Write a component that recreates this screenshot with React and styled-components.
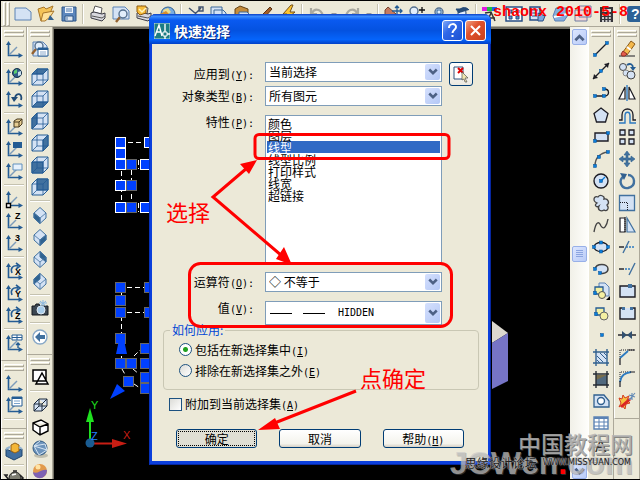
import React, { useState } from "react";
import styled, { createGlobalStyle, css } from "styled-components";

const GlobalStyle = createGlobalStyle`
  * {
    box-sizing: border-box;
  }

  body {
    margin: 0;
    background: #000;
    font-family: "Noto Sans CJK SC", "Liberation Sans", sans-serif;
    font-size: 12px;
    color: #000;
  }
`;

const Shell = styled.div`
  position: relative;
  display: flex;
  flex-direction: column;
  height: 100vh;
  padding: 1px 0 1px 1px;
  overflow: hidden;
`;

const TopBar = styled.header`
  display: flex;
  align-items: center;
  height: 26px;
  padding-left: 2px;
  background: #ece9d8;
  border-bottom: 1px solid #aca899;
  overflow: hidden;
  flex-shrink: 0;
`;

const Workspace = styled.div`
  display: flex;
  flex: 1;
  min-height: 0;
`;

const Dock = styled.div`
  display: flex;
  background: #ece9d8;
`;

const Column = styled.div`
  display: flex;
  flex-direction: column;
  width: 26px;
  overflow: hidden;
  border-right: 1px solid #aca899;
`;

const ToolBar = styled.div`
  display: flex;
  flex-direction: column;
  align-items: center;
  flex-shrink: 0;
  padding: 3px 2px 6px 1px;
  border-bottom: 1px solid #aca899;
  border-left: 1px solid #fff;
`;

const Grip = styled.div`
  flex-shrink: 0;
  border: 1px solid #aca899;
  border-top-color: #fff;
  border-left-color: #fff;

  ${({ $upright }) =>
    $upright
      ? css`
          width: 3px;
          height: 24px;
          margin-right: 1px;
        `
      : css`
          width: 20px;
          height: 3px;
          margin-bottom: 1px;
        `}
`;

const Divider = styled.div`
  flex-shrink: 0;
  background: #c5c2b0;
  border: 0 solid #fff;

  ${({ $upright }) =>
    $upright
      ? css`
          width: 2px;
          height: 20px;
          margin: 0 2px;
          border-right-width: 1px;
        `
      : css`
          width: 20px;
          height: 2px;
          margin: 2px 0;
          border-bottom-width: 1px;
        `}
`;

const ToolButton = styled.button`
  display: flex;
  align-items: center;
  justify-content: center;
  flex-shrink: 0;
  width: ${({ $narrow }) => ($narrow ? "12px" : "23px")};
  height: 22px;
  padding: 0;
  border: 0;
  background: none;
`;

const Glyph = styled.svg`
  display: block;
  width: 18px;
  height: 18px;
  overflow: visible;
`;

const Canvas = styled.main`
  display: flex;
  justify-content: space-between;
  flex: 1;
  min-width: 0;
  background: #000;
  border-top: 2px solid #716f64;
  border-left: 1px solid #716f64;
`;

const Sketch = styled.svg`
  display: block;
  height: 450px;
  width: ${({ $width }) => $width};
`;

const ScrollTrack = styled.div`
  display: flex;
  flex-direction: column;
  align-items: center;
  justify-content: space-between;
  width: 18px;
  padding: 2px 0 0;
  background: linear-gradient(to right, #f1f0e8, #fefefb);
`;

const ScrollPart = styled.button`
  display: flex;
  align-items: center;
  justify-content: center;
  width: 15px;
  height: 16px;
  padding: 0;
  border: 1px solid #98b0e8;
  border-radius: 2px;
  background: linear-gradient(135deg, #dce6ff, #b9cbf7);
`;

const Dialog = styled.section`
  position: absolute;
  top: 14px;
  left: 0;
  right: 0;
  width: 342px;
  margin: 0 auto;
  padding: 0 3px 4px;
  border-radius: 7px 7px 0 0;
  background: #0b3fdc;
  box-shadow: inset 1px 0 #0831b8, inset -1px -1px #0626a0;
`;

const TitleBar = styled.div`
  display: flex;
  align-items: center;
  height: 30px;
  margin: 0 -3px;
  padding: 3px 5px 0;
  border-radius: 7px 7px 0 0;
  background: linear-gradient(#0a3fc4, #3a8cff 8%, #0a5af0 20%, #0452e0 55%, #0564fb 85%, #0340c6);
`;

const Title = styled.h1`
  flex: 1;
  margin: 0 0 0 4px;
  font-size: 14px;
  line-height: 20px;
  color: #fff;
  text-shadow: 1px 1px #0a2a80;
`;

const CaptionButton = styled.button`
  display: flex;
  align-items: center;
  justify-content: center;
  width: 21px;
  height: 21px;
  margin-left: 2px;
  padding: 0;
  border: 1px solid #fff;
  border-radius: 3px;
  background: ${({ $close }) =>
    $close
      ? "linear-gradient(135deg, #f0a080, #e0512c 40%, #c8401c)"
      : "linear-gradient(135deg, #7fa8f8, #3068e8 40%, #1c50d0)"};
`;

const Body = styled.form`
  padding: 18px 0 13px;
  background: #ece9d8;
`;

const FormRow = styled.div`
  display: grid;
  grid-template-columns: 1fr 177px 24px;
  column-gap: 7px;
  align-items: start;
  margin: 0 15px ${({ $space = 0 }) => $space}px 0;
`;

const FormLabel = styled.label`
  align-self: ${({ $top }) => ($top ? "start" : "center")};
  padding-right: 4px;
  line-height: 14px;
  text-align: right;
  white-space: nowrap;
`;

const Mnemonic = styled.span`
  font-family: "DejaVu Sans Mono", monospace;
  font-size: 10px;
  line-height: 1;
`;

const SelectFrame = styled.div`
  display: grid;
  align-items: center;
  height: ${({ $tall }) => ($tall ? "24px" : "20px")};
  border: 1px solid #7f9db9;
  background: #fff;

  > * {
    grid-area: 1 / 1;
  }
`;

const Select = styled.select`
  appearance: none;
  width: 100%;
  height: 18px;
  padding: 0 20px 0 ${({ $inset = 3 }) => $inset}px;
  border: 0;
  background: none;
  font-family: ${({ $mono }) =>
    $mono ? '"DejaVu Sans Mono", monospace' : '"Noto Sans CJK SC", sans-serif'};
  font-size: ${({ $mono }) => ($mono ? "10px" : "12px")};
  line-height: 18px;
  color: #000;
  outline: 0;
`;

const DropArrow = styled.span`
  display: flex;
  align-items: center;
  justify-content: center;
  justify-self: end;
  align-self: stretch;
  width: 15px;
  margin: 1px;
  border-radius: 2px;
  background: linear-gradient(135deg, #d5e0fd, #b4c8f6);
  pointer-events: none;
`;

const LinePreview = styled.svg`
  width: 56px;
  height: 3px;
  margin-left: 4px;
  pointer-events: none;
`;

const ListBox = styled.select`
  width: 100%;
  height: 148px;
  padding: 1px;
  border: 1px solid #7f9db9;
  border-radius: 0;
  background: #fff;
  font-family: "Noto Sans CJK SC", sans-serif;
  font-size: 12px;
  outline: 0;
  overflow: hidden;

  option {
    display: flex;
    align-items: center;
    height: 12px;
    min-height: 0;
    padding: 0 1px;
    line-height: 12px;
    color: #000;
  }

  option:checked {
    background: #316ac5 linear-gradient(#316ac5, #316ac5);
    color: #fff;
  }
`;

const PickButton = styled.button`
  display: flex;
  align-items: center;
  justify-content: center;
  width: 24px;
  height: 24px;
  padding: 0;
  border: 1px solid #003c74;
  border-radius: 3px;
  background: linear-gradient(#fff, #ece9e0);
`;

const Group = styled.fieldset`
  margin: 0 9px 0 11px;
  padding: 4px 15px 8px;
  border: 1px solid #c9c7b4;
  border-radius: 4px;
`;

const Legend = styled.legend`
  margin-left: -9px;
  padding: 0 2px;
  line-height: 10px;
  color: #0046d5;
`;

const Choice = styled.label`
  display: flex;
  align-items: center;
  gap: 3px;
  line-height: ${({ $loose }) => ($loose ? "21px" : "14px")};
  margin: ${({ $loose }) => ($loose ? "0" : "7px 0 0 17px")};

  input {
    appearance: none;
    width: 13px;
    height: 13px;
    margin: 0;
    border: 1px solid #1c5180;
    background: linear-gradient(135deg, #dcdcd7, #fff);
  }

  input[type="radio"] {
    border-radius: 50%;
  }

  input:checked {
    background: radial-gradient(circle, #21a121 0 2px, #fff 3px);
  }
`;

const Actions = styled.div`
  display: flex;
  gap: 22px;
  margin: 18px 24px 0;
`;

const PushButton = styled.button`
  flex: 1;
  height: 19px;
  padding: 0;
  border: 1px solid #003c74;
  border-radius: 3px;
  background: ${({ $pressed }) =>
    $pressed ? "#e0dfd4" : "linear-gradient(#fff, #f4f3ec 80%, #d6d0c5)"};
  font: inherit;
  line-height: 15px;
  color: #000;
  outline: ${({ $pressed }) => ($pressed ? "1px dotted #000" : "0")};
  outline-offset: -3px;
`;

const Markup = styled.svg`
  position: absolute;
  inset: 0;
  width: 342px;
  height: 451px;
  pointer-events: none;
`;

const Note = styled.span`
  position: absolute;
  left: ${({ $left }) => $left}px;
  top: ${({ $top }) => $top}px;
  font-size: 22px;
  line-height: 24px;
  color: #f00;
  pointer-events: none;
`;

const Stamp = styled.div`
  position: absolute;
  top: 4px;
  right: 12px;
  font: bold 15px/18px "Liberation Mono", monospace;
  color: #f00;
  white-space: pre;
  pointer-events: none;
`;

const Watermark = styled.div`
  position: absolute;
  right: 7px;
  bottom: 6px;
  display: grid;
  justify-items: end;
  pointer-events: none;
`;

const SiteName = styled.span`
  font-size: 23px;
  font-weight: 500;
  line-height: 18px;
  color: rgba(180, 180, 180, 0.85);
  text-shadow: 1px 1px rgba(90, 90, 90, 0.7);
`;

const SiteAddress = styled.span`
  grid-area: 2 / 1;
  font: bold 32px/22px "Liberation Sans", sans-serif;
  color: rgba(200, 200, 200, 0.68);
  text-shadow: 1px 1px rgba(110, 110, 110, 0.4);

  i {
    font-style: normal;
    color: #f00;
  }
`;

const ForumName = styled.span`
  grid-area: 2 / 1;
  align-self: center;
  display: flex;
  align-items: center;
  gap: 6px;
  padding-right: 2px;
  line-height: 18px;
  color: #222;
  text-shadow: 0 0 1px #bbb, 0 0 1px #bbb, 0 0 2px #bbb;
  white-space: nowrap;

  small {
    font: 8px/12px "DejaVu Sans", sans-serif;
  }
`;

const BLUE = "#245c94";
const INK = "#1c1c24";
const PALE = "#d4e2f4";

const Axes = () => (
  <>
    <path d="M3.5 3V15.5H15" fill="none" stroke={BLUE} strokeWidth="1.6" />
    <path d="M1 5L3.5 1L6 5ZM13.5 13L18 15.5L13.5 18Z" fill={BLUE} />
  </>
);

const axesWith = (extra) => (
  <>
    <Axes />
    <path d="M4 15L12 7" stroke="#7d9cba" strokeWidth="1.4" />
    {extra}
  </>
);

const axesLetter = (letter, turning) => (
  <>
    <Axes />
    {turning ? (
      <path d="M7 11C5 6 8 3 13 4M11 1L15 4L11 7" fill="none" stroke={BLUE} strokeWidth="1.6" />
    ) : (
      <path d="M4 15L11 8" stroke="#7d9cba" strokeWidth="1.4" />
    )}
    <text x="10" y={turning ? 13 : 7} fontFamily="Liberation Sans, sans-serif" fontWeight="bold" fontSize="9">
      {letter}
    </text>
  </>
);

const cube = (face) => (
  <g stroke={BLUE} strokeLinejoin="round">
    <path d="M1 6L6 1H17V12L12 17H1Z" fill={PALE} />
    <path d={face} fill="#41719f" />
    <path d="M1 6H12V17M12 6L17 1M6 1V12H17M6 12L1 17" fill="none" strokeWidth="0.8" />
  </g>
);

const gem = (face) => (
  <g stroke="#41719f" strokeLinejoin="round">
    <path d="M9 1.5L15 7V12L9 17.5L3 12V7Z" fill={PALE} />
    <path d={face} fill="#2f628f" />
    <path d="M3 7L9 12L15 7M9 12V17" fill="none" strokeWidth="0.8" />
  </g>
);

const node = (x, y) => <rect x={x - 1.5} y={y - 1.5} width="3" height="3" fill="#0a7edb" stroke="#064f91" strokeWidth="0.5" />;

const Sheet = () => <path d="M2 2H12L16 6V16H2Z" fill={PALE} stroke="#5b82b4" />;
const Lens = ({ x, y }) => (
  <>
    <path d={`M${x - 3} ${y + 3}L${x - 7} ${y + 8}`} stroke="#94622f" strokeWidth="2.4" />
    <circle cx={x} cy={y} r="4" fill="#e2eefb" stroke="#55708e" strokeWidth="1.4" />
  </>
);

const Printer = () => (
  <>
    <path d="M6 1L13 3L12 9L4 7Z" fill="#fff" stroke="#555" />
    <path d="M2 8L5 7L13 9L16 8V13L13 16L2 13Z" fill="#d8d8de" stroke="#3c3c46" />
    <path d="M3 11L13 13L16 11" fill="none" stroke="#555" />
  </>
);

const drawings = {
  // standard bar
  blank: <path d="M1 3H12L17 7V15H1Z" fill={PALE} stroke="#5b82b4" />,
  open: (
    <>
      <path d="M1 4L7 2L9 4L16 1L14 6L6 15L4 16Z" fill="#f4c358" stroke="#a8762a" />
      <path d="M6 8L17 6L13 12L8 16H4Z" fill="#ffe19a" stroke="#a8762a" />
      <path d="M13 10L17 15H11Z" fill="#31608f" />
    </>
  ),
  save: (
    <>
      <path d="M2 2H16V16H2Z" fill="#5d87bd" stroke="#2e5688" />
      <path d="M5 2H13V8H5Z" fill="#eef3fb" />
      <path d="M5 11H13V16H5Z" fill="#dfe7f1" stroke="#2e5688" />
      <path d="M6 4H12M6 6H12M7 12V15" stroke="#4d78ad" />
    </>
  ),
  print: <Printer />,
  preview: (
    <>
      <path d="M1 2H13L17 6V14H1Z" fill={PALE} stroke="#5b82b4" />
      <Lens x={11} y={9} />
    </>
  ),
  publish: (
    <>
      <Printer />
      <path d="M2 1H11V8L5 10L2 7Z" fill="#f7bd39" stroke="#8d5b13" />
      <path d="M4 4L7 7L11 3" fill="none" stroke="#fff4bf" strokeWidth="1.5" />
    </>
  ),
  web: (
    <>
      <circle cx="10" cy="9" r="7" fill="#78abe0" stroke="#31608f" />
      <path d="M5 5L10 3L13 7L9 10L6 9Z" fill="#eddd8e" />
      <path d="M2 9L8 6L12 10L6 14Z" fill="#d88d2c" />
    </>
  ),
  cut: <path d="M2 3L14 13M14 3L4 13M12 2H16V6H12ZM3 12H7V16H3Z" fill="none" stroke="#42536e" strokeWidth="1.4" />,
  copyClip: <path d="M1 2H12V12H1ZM4 5H13L16 8V16H4Z" fill={PALE} stroke="#3d6898" />,
  paste: (
    <>
      <path d="M2 4L7 1L15 4V15H2Z" fill="#c48c3b" stroke="#634216" />
      <path d="M6 7H14L17 10V17H6Z" fill={PALE} stroke="#3d6898" />
    </>
  ),
  match: <path d="M14 2L16 4L8 13L3 16L5 11Z" fill="#a35e28" stroke="#593315" />,
  bolt: <path d="M12 0L4 9H8L4 17L16 7H11L14 0Z" fill="#ffc52e" stroke="#72511b" />,
  undo: <path d="M15 14C15 4 7 2 4 8M3 3V9H9" fill="none" stroke="#aaa99f" strokeWidth="2.2" />,
  redo: <path d="M3 14C3 4 11 2 14 8M15 3V9H9" fill="none" stroke="#aaa99f" strokeWidth="2.2" />,
  more: <path d="M6 8H12L9 11Z" fill="#999" />,
  pan: (
    <>
      <path d="M1 5L4 2L12 9V14L7 16L1 9Z" fill="#c57a60" stroke="#76442f" />
      <path d="M13 1V11M8 6H18M11 3L13 1L15 3M16 4L18 6L16 8" fill="none" stroke={BLUE} strokeWidth="1.3" />
    </>
  ),
  zoomLive: (
    <>
      <Lens x={7} y={6} />
      <path d="M15 2V8M12 5H18M12 11H18" stroke="#111" strokeWidth="1.3" />
    </>
  ),
  zoomWin: (
    <>
      <Lens x={9} y={7} />
      <path d="M7 5H11V9H7Z" fill="none" stroke={BLUE} />
    </>
  ),
  zoomBack: (
    <>
      <Lens x={9} y={8} />
      <path d="M6 8C6 2 13 1 16 5M6 8L3 4H9Z" fill="#274d79" stroke="#274d79" />
    </>
  ),
  props: (
    <>
      <path d="M0 2H5V6H0Z" fill="#e21ae2" />
      <path d="M5 2H10V6H5Z" fill="#20c040" />
      <path d="M10 2H15V6H10Z" fill="#2060f0" />
      <path d="M3 8L9 7L13 16M9 8L5 17M7 13H13" stroke="#333" strokeWidth="1.5" fill="none" />
    </>
  ),
  design: (
    <>
      <path d="M1 2H17V16H1Z" fill="#fff" stroke="#284f85" strokeWidth="1.5" />
      <path d="M4 5H7V8H4ZM11 5H14V8H11ZM4 11H7V14H4ZM11 11H14V14H11Z" fill="#5d8dc6" stroke="#284f85" />
    </>
  ),
  palettes: (
    <>
      <path d="M2 2H12V15H2Z" fill={PALE} stroke="#284f85" strokeWidth="1.5" />
      <path d="M4 5H10M4 8H8M4 11H9" stroke="#284f85" />
      <path d="M10 8L17 11L15 16H10Z" fill="#7aa6dc" stroke="#284f85" />
    </>
  ),
  sheets: (
    <>
      <path d="M2 11L5 3H16L17 10L13 16H4Z" fill="#87aede" stroke="#5b82b4" />
      <path d="M3 12L16 9" stroke="#fff" strokeWidth="2" />
    </>
  ),
  markup: <path d="M5 1H17V12H5ZM1 5H13V16H1Z" fill="#f5d5d5" stroke="#6d7fa3" />,
  calc: (
    <>
      <path d="M3 2H16V17H3Z" fill="#35353a" />
      <path d="M5 4H14V7H5Z" fill="#d4ded8" />
      <path d="M5 10H14M5 13H14M5 16H14" stroke="#fff" strokeWidth="1.6" strokeDasharray="2 1.4" />
    </>
  ),
  help: (
    <>
      <rect x="1" y="1" width="16" height="16" rx="3" fill="#2d6296" />
      <text x="5" y="14" fontSize="14" fontWeight="bold" fontFamily="Liberation Sans, sans-serif" fill="#fff">?</text>
    </>
  ),

  // coordinate systems
  ucs: axesWith(null),
  ucsWorld: axesWith(
    <>
      <circle cx="12" cy="5" r="4.5" fill="#315c87" stroke="#17324d" />
      <path d="M9 3L12 1L12 5L9 6Z" fill="#59cc6f" />
      <path d="M13 4L16 3V7L13 8Z" fill="#c7ddea" />
    </>
  ),
  ucsPrev: (
    <>
      <Axes />
      <path d="M16 10C18 3 11 2 10 8" fill="none" stroke="#214c77" strokeWidth="1.8" />
      <path d="M6 7H13L9 12Z" fill="#214c77" />
    </>
  ),
  ucsFace: axesWith(
    <>
      <path d="M9 3L12 1H17V6L14 9H9Z" fill="#e5cc92" stroke="#46391e" />
      <path d="M9 4H14V9M14 4L17 1" fill="none" stroke="#46391e" />
    </>
  ),
  ucsObject: axesWith(<path d="M8 2H17V8H8Z" fill="#245c94" />),
  ucsView: axesWith(<path d="M8 2H17V8H8Z" fill="#e6f1fc" stroke="#6090bd" />),
  ucsOrigin: axesWith(<path d="M1.5 13.5H5.5V17.5H1.5Z" fill="#fff" stroke="#000" strokeWidth="1.4" />),
  ucsZ: axesLetter("Z"),
  ucs3: axesLetter("3"),
  ucsX: axesLetter("X", true),
  ucsY: axesLetter("Y", true),
  ucsZr: axesLetter("Z", true),
  ucsApply: axesWith(
    <>
      <path d="M7 1H17V6H7ZM12 1V6M7 3.5H17" fill="#fff" stroke={BLUE} />
      <path d="M13 9V14M11 11L13 9L15 11" fill="none" stroke={BLUE} strokeWidth="1.4" />
    </>
  ),
  ucsDialog: axesWith(
    <>
      <path d="M7 1H17V10H7Z" fill="#fff" stroke={BLUE} />
      <path d="M7 2H17" stroke={BLUE} strokeWidth="2" />
      <path d="M9 5H15M9 7.500H15" stroke="#7ba3cc" />
    </>
  ),
  solid: (
    <>
      <path d="M1 7L8 10L17 7V14L9 18L1 14Z" fill="#416f9f" stroke="#1f456d" />
      <path d="M6 3L10 1L14 3V9L10 11L6 9Z" fill="#f4b637" stroke="#926119" />
      <path d="M1 7L5 5M17 7L14 5" stroke="#8fb0cf" strokeWidth="2" />
    </>
  ),
  teapot: (
    <>
      <ellipse cx="10" cy="8" rx="6" ry="6" fill="#7c7c70" stroke="#222" />
      <path d="M8 1H12M4 10L0 5L3 5M15 5L18 8L15 11" fill="none" stroke="#222" strokeWidth="1.6" />
      <path d="M7 5L11 4" stroke="#fff" strokeWidth="1.5" />
    </>
  ),

  // views
  named: (
    <>
      <Sheet />
      <Lens x={8} y={6} />
      <path d="M7 8H17V16H7Z" fill="#fff" stroke="#245c94" />
      <path d="M7 9H17" stroke="#245c94" strokeWidth="2" />
      <path d="M9 12H15M9 14H15" stroke="#8aa9cb" />
    </>
  ),
  top: cube("M1 6L6 1H17L12 6Z"),
  bottom: cube("M1 17L6 12H17L12 17Z"),
  left: cube("M1 6L6 1V12L1 17Z"),
  right: cube("M12 6L17 1V12L12 17Z"),
  front: cube("M1 6H12V17H1Z"),
  back: cube("M6 1H17V12H6Z"),
  sw: gem("M3 7L9 12V17.5L3 12Z"),
  se: gem("M9 12L15 7V12L9 17.5Z"),
  ne: gem("M9 1.5L15 7V12L9 7Z"),
  nw: gem("M3 7L9 1.5V7L3 12Z"),
  camera: (
    <>
      <path d="M1 6H4L5 4H8L9 6H17V15H1Z" fill="#3c4752" stroke="#15191d" />
      <circle cx="10" cy="10" r="4" fill="#a8cdea" stroke="#dfe9f2" />
      <path d="M12 0V7M8 3H16M9 1L15 6M15 1L9 6" stroke="#8bb7de" />
    </>
  ),
  backward: (
    <>
      <circle cx="9" cy="9" r="7" fill="#fff" stroke="#88a8c7" strokeWidth="1.4" />
      <path d="M4 9L9 4V7H14V11H9V14Z" fill="#41719f" />
    </>
  ),
  wire2d: <path d="M2 2H15V13H2ZM11 5L17 16H5Z" fill="#fff" stroke="#000" strokeWidth="1.5" />,
  wire3d: <path d="M3 8L8 3H16V10L11 15H3ZM3 8H11V15M11 8L16 3M8 3V10H16M8 10L3 15" fill={PALE} stroke="#1c2b3c" />,
  hidden: <path d="M2 5L10 2L17 6V13L9 17L2 12ZM2 5L9 9L17 6M9 9V17" fill="#fff" stroke="#000" strokeWidth="1.4" />,
  flat: (
    <>
      <ellipse cx="10" cy="15.500" rx="7" ry="2.500" fill="#c1bfae" />
      <circle cx="9" cy="8" r="7" fill="#6d94bc" stroke="#315a83" />
      <path d="M9 1L3 6L14 4L16 10L8 15L3 6L16 10" fill="none" stroke="#d5e4f2" />
    </>
  ),
  shaded: (
    <>
      <circle cx="9" cy="9" r="7" fill="#e29a4c" />
      <path d="M2 10C6 13 11 6 16 8C16 18 3 19 2 10Z" fill="#7e62b4" />
      <circle cx="7" cy="5" r="2.500" fill="#ffe2a3" />
    </>
  ),

  // draw
  line: (<><path d="M3 15L15 3" stroke={INK} strokeWidth="1.3" />{node(3, 15)}{node(15, 3)}</>),
  xline: (<><path d="M1 17L17 1" stroke={INK} strokeWidth="1.3" /><path d="M1 17L2 12L6 16ZM17 1L12 2L16 6Z" fill={INK} />{node(9, 9)}</>),
  pline: (<><path d="M3 12H12C18 12 18 5 12 5" fill="none" stroke={INK} strokeWidth="1.3" />{node(3, 12)}{node(12, 12)}{node(12, 5)}</>),
  polygon: <path d="M9 2L16 7.500L13.500 16H4.500L2 7.500Z" fill={PALE} stroke={INK} strokeWidth="1.3" />,
  rect: (<><path d="M3 5H16V13H3Z" fill={PALE} stroke={INK} strokeWidth="1.4" />{node(3, 13)}{node(16, 5)}</>),
  arc: (<><path d="M3 16C3 8 8 3 16 2" fill="none" stroke="#555" strokeWidth="1.5" />{node(3, 16)}{node(7, 7)}{node(16, 2)}</>),
  circle: (<><circle cx="9" cy="9" r="7" fill={PALE} stroke={INK} strokeWidth="1.4" /><path d="M9 9L13 5" stroke="#0a7edb" strokeWidth="1.2" />{node(9, 9)}</>),
  cloud: <path d="M5 9C0 7 2 1 6 3C8 0 13 2 12 5C16 4 18 9 15 11C18 15 14 18 12 16C9 18 5 16 7 12C4 14 2 11 5 9Z" fill={PALE} stroke="#444" strokeWidth="1.3" />,
  spline: <path d="M2 16C4 5 7 5 9 10C12 15 15 9 16 3" fill="none" stroke="#444" strokeWidth="1.4" />,
  ellipse: (<><ellipse cx="9" cy="9" rx="7" ry="4.500" fill={PALE} stroke={INK} strokeWidth="1.3" />{node(2, 9)}{node(16, 9)}{node(9, 4.5)}{node(9, 13.5)}</>),
  earc: (<><path d="M3 9C4 3 16 3 16 9C16 13 11 14 8 13" fill={PALE} stroke="#444" strokeWidth="1.5" />{node(3, 9)}{node(8, 13)}</>),
  insert: (
    <>
      <path d="M7 1H13L17 5V14H7Z" fill={PALE} stroke="#5b82b4" />
      <path d="M3 5H11V12H3Z" fill="#f4f0a2" stroke="#245c94" strokeWidth="1.3" />
      <circle cx="10" cy="13" r="3.500" fill="#f4f0a2" stroke="#555" />
      <path d="M18 14V18H14Z" />
      {node(3, 11)}
    </>
  ),
  block: (
    <>
      <path d="M4 4H12V11H4Z" fill="#f4f0a2" stroke="#245c94" strokeWidth="1.3" />
      <circle cx="12" cy="12" r="4" fill="#f4f0a2" stroke="#666" />
      {node(4, 10)}
    </>
  ),
  point: node(10, 9),
  hatch: (<><path d="M4 5H15V15H4Z" fill={PALE} /><path d="M1 4H17M1 15H17M4 1V18M15 1V18" stroke="#31608f" strokeWidth="1.4" /><path d="M5 8L11 14M8 5L14 11M5 12L8 15M12 5L15 8" stroke="#31608f" /></>),
  gradient: (<><path d="M4 5H15V15H4Z" fill="#796d4a" /><path d="M4 10L15 5V15H4Z" fill="#51697e" /><path d="M1 4H17M1 15H17M4 1V18M15 1V18" stroke="#252b33" strokeWidth="1.4" /></>),
  region: (<><path d="M2 3H12L17 9V15H2Z" fill={PALE} stroke="#31608f" strokeWidth="1.3" /><circle cx="9" cy="9" r="3.500" fill="#fff" stroke="#31608f" strokeWidth="1.4" /></>),
  table: (<><path d="M2 3H16V15H2Z" fill="#fff" stroke="#5b82b4" strokeWidth="1.4" /><path d="M2 4H16" stroke="#5b82b4" strokeWidth="2" /><path d="M2 8H16M2 12H16M7 4V15M12 4V15" stroke="#5b82b4" /></>),
  text: <text x="3" y="16" fontSize="17" fontFamily="Liberation Sans, sans-serif" fill="#333">A</text>,

  // modify
  erase: (
    <>
      <path d="M1 16H17" stroke={INK} />
      <path d="M5 12L13 1L17 4L9 15Z" fill="#f4b94d" stroke="#8a5a1b" />
      <path d="M5 11L9 14L7 16H4L3 14Z" fill="#e35b4c" stroke="#913026" />
      <path d="M9 7L13 10" stroke="#fff" strokeWidth="2" />
    </>
  ),
  copy: (
    <>
      <circle cx="5" cy="5" r="3.500" fill={PALE} stroke="#444" />
      <circle cx="8" cy="11" r="3" fill={PALE} stroke="#888" />
      <circle cx="13" cy="13" r="4" fill={PALE} stroke="#444" />
      <path d="M9 3C12 1 15 2 15 6" fill="none" stroke={BLUE} strokeWidth="1.8" />
      <path d="M12 5H18L15 9Z" fill={BLUE} />
    </>
  ),
  mirror: (<><path d="M7 3V15H1ZM11 3V15H17Z" fill="#fff" stroke={INK} strokeWidth="1.2" /><path d="M9 1V17" stroke="#3b82c4" strokeWidth="1.5" /></>),
  offset: (<><path d="M1 14H4V9C4 1 15 1 15 9V14H18" fill="none" stroke={INK} strokeWidth="1.3" /><path d="M1 17H7V10C7 5 12 5 12 10V17H18" fill="none" stroke="#2c7ac0" strokeWidth="1.4" /></>),
  array: <path d="M2 2H7V7H2ZM11 2H16V7H11ZM2 11H7V16H2ZM11 11H16V16H11Z" fill={PALE} stroke={INK} strokeWidth="1.3" />,
  move: <path d="M9 1L12 5H10V8H13V6L17 9L13 12V10H10V13H12L9 17L6 13H8V10H5V12L1 9L5 6V8H8V5H6Z" fill="#41719f" stroke="#2f628f" strokeWidth="0.6" />,
  rotate: (<><path d="M6 4C-1 9 4 17 10 16C19 14 17 3 10 3" fill="none" stroke="#41719f" strokeWidth="2.4" /><path d="M2 1L9 2L6 8Z" fill="#31608f" /></>),
  scale: (<><path d="M1.500 1.500H16.500V16.500H1.500Z" fill={PALE} stroke="#41719f" strokeWidth="1.3" /><path d="M2 8.500H9.500V16" fill="none" stroke={INK} strokeDasharray="1 1" /></>),
  stretch: (<><path d="M2 2H7V16H2Z" fill="#fff" stroke={INK} strokeWidth="1.2" /><path d="M7 1V17" stroke={INK} strokeDasharray="1 1" /><path d="M9 2L17 16H9Z" fill={PALE} stroke="#41719f" strokeWidth="1.2" /></>),
  trim: (<><path d="M1 9H6" stroke={INK} strokeWidth="1.4" /><path d="M8 9H17" stroke="#2c7ac0" strokeWidth="1.4" strokeDasharray="2 1" /><path d="M5 15L11 3" stroke="#41719f" strokeWidth="1.4" /></>),
  extend: (<><path d="M1 9H6" stroke={INK} strokeWidth="1.4" /><path d="M7 9H12" stroke="#2c7ac0" strokeWidth="1.4" strokeDasharray="2 1" /><path d="M11 15L17 3" stroke="#41719f" strokeWidth="1.4" /></>),
  breakAt: (<><path d="M2 4H17V15H2Z" fill={PALE} stroke={INK} strokeWidth="1.4" /><rect x="10" y="2" width="4" height="4" fill="#41719f" /></>),
  breakOut: (<><path d="M5 4H2V15H17V4H14" fill={PALE} stroke={INK} strokeWidth="1.4" /><path d="M4 3H7V6H4ZM12 3H15V6H12Z" fill="#41719f" /></>),
  join: (<><path d="M0 9H18" stroke={INK} strokeWidth="1.4" /><path d="M4 5L9 9L4 13ZM14 5L9 9L14 13Z" fill="#31506f" /></>),
  chamfer: (<><path d="M2 9V2H17" fill="none" stroke={INK} strokeDasharray="1 1" /><path d="M2 10L10 3" stroke="#2c7ac0" strokeWidth="1.8" /><path d="M2 10V17M10 2H17" stroke={INK} strokeWidth="1.2" /></>),
  fillet: (<><path d="M2 9V2H10" fill="none" stroke={INK} strokeDasharray="1 1" /><path d="M2 12C3 5 7 3 13 2" fill="none" stroke="#2c7ac0" strokeWidth="1.8" /><path d="M2 11V17M12 2H17" stroke={INK} strokeWidth="1.2" /></>),
  explode: (
    <>
      <path d="M1 6L4 7L5 3L7 6L11 4L9 8L12 11L8 12L7 17L4 13L1 15L3 11Z" fill="#f6c242" stroke="#d33a20" />
      <path d="M3 15L12 7" stroke="#db2424" strokeWidth="3" />
      <path d="M11 8L14 5M14 1V8M11 3L17 5M17 1L12 7" stroke="#6189b5" strokeWidth="1.1" />
    </>
  ),
};

const standardBar =
  "blank open save | print preview publish web | cut copyClip paste match bolt | undo more redo more | pan zoomLive zoomWin zoomBack | props design palettes sheets markup calc | help";

const leftColumns = [
  [
    "ucs | ucsWorld ucsPrev | ucsFace ucsObject ucsView | ucsOrigin ucsZ ucs3 | ucsX ucsY ucsZr | ucsApply",
    "ucs ucsDialog |",
    "solid | teapot",
  ],
  [
    "named | top bottom left right front back | sw se ne nw | camera | backward",
    "wire2d | wire3d hidden flat shaded",
  ],
];

const rightColumns = [
  ["line xline pline polygon rect arc circle cloud spline ellipse earc insert block point hatch gradient region table text"],
  ["erase copy mirror offset array move rotate scale stretch trim extend breakAt breakOut join chamfer fillet explode"],
];

const Tools = ({ names, upright }) => (
  <>
    <Grip $upright={upright} />
    <Grip $upright={upright} />
    {names.split(" ").map((name, i) =>
      name === "|" ? (
        <Divider key={i} $upright={upright} />
      ) : (
        <ToolButton key={i} type="button" aria-label={name} $narrow={name === "more"}>
          <Glyph viewBox="0 0 18 18">{drawings[name]}</Glyph>
        </ToolButton>
      )
    )}
  </>
);

const ToolDock = ({ columns }) => (
  <Dock>
    {columns.map((bars, i) => (
      <Column key={i}>
        {bars.map((names) => (
          <ToolBar key={names}>
            <Tools names={names} />
          </ToolBar>
        ))}
      </Column>
    ))}
  </Dock>
);

const handles = [
  [120, 142, "#fff"], [149, 142, "#fff"], [120, 153, "#fff"], [120, 164, "#fff"],
  [131, 164, "#666"], [145, 164, "#fff"], [120, 185, "#fff"], [131, 185, "#666"],
  [120, 207, "#fff"], [131, 207, "#666"], [145, 207, "#fff"],
  [120, 287, "#666"], [149, 287, "#666"], [120, 300, "#666"], [120, 312, "#666"],
  [149, 312, "#666"], [120, 338, "#666"], [145, 348, "#666"], [120, 363, "#666"],
  [131, 363, "#666"], [145, 363, "#666"], [128, 381, "#666"], [145, 377, "#666"], [145, 388, "#666"],
];

const Wireframe = () => (
  <Sketch $width="96px" viewBox="54 29 96 450">
    <g stroke="#fff" strokeDasharray="5 3" fill="none">
      <path d="M128 142.500H145M121.500 147V203M131.500 170V203M138.500 160V169M138.500 203V212" />
      <path d="M127 287.500H145M127 312.500H145M121.500 292V360M122 369L127 378M133 369L139 374M134 356L140 350M134 384L140 388" />
    </g>
    {handles.map(([x, y, edge]) => (
      <rect key={`${x}-${y}`} x={x - 4.5} y={y - 4.5} width="10" height="10" fill="#0040ff" stroke={edge} />
    ))}
    <path d="M119 340H124L127 354H116ZM117 384L125 391L110 399Z" fill="#0040ff" />
    <path d="M90 441V419" stroke="#1fe01f" strokeWidth="2" />
    <path d="M90 408L94 422H86Z" fill="#1fe01f" />
    <path d="M92 443.500H113" stroke="#c81e14" strokeWidth="2" />
    <path d="M112 439L127 443.500L112 448Z" fill="#c81e14" />
    <circle cx="90" cy="443" r="4.500" fill="#1a5c92" />
    <g fontFamily="Liberation Sans, sans-serif" fontSize="11">
      <text x="91" y="409" fill="#1fe01f">Y</text>
      <text x="91" y="440" fill="#2080ff">Z</text>
      <text x="123" y="439" fill="#c81e14">X</text>
    </g>
  </Sketch>
);

const Block = () => (
  <Sketch $width="78px" viewBox="491 29 78 450">
    <path d="M491 321L507 333L491 343Z" fill="#dcd8cf" />
    <path d="M491 343L507 333V381L491 389Z" fill="#7674c6" />
  </Sketch>
);

const Chevron = ({ up, size = 8 }) => (
  <svg width={size} height={size} viewBox="0 0 8 8">
    <path d={up ? "M1 6L4 3L7 6" : "M1 2L4 5L7 2"} fill="none" stroke="#4d6185" strokeWidth="2" />
  </svg>
);

const Caption = ({ text, hotkey, colon }) => (
  <>
    {text}
    <Mnemonic>
      (<u>{hotkey}</u>){colon && ":"}
    </Mnemonic>
  </>
);

const Combo = ({ id, value, tall, mono, inset, children }) => (
  <SelectFrame $tall={tall}>
    {children}
    <Select id={id} $mono={mono} $inset={inset} defaultValue={value}>
      <option>{value}</option>
    </Select>
    <DropArrow>
      <Chevron size={10} />
    </DropArrow>
  </SelectFrame>
);

const properties = ["颜色", "图层", "线型", "线型比例", "打印样式", "线宽", "超链接"];

const QuickSelect = () => {
  const [property, setProperty] = useState("线型");
  const [mode, setMode] = useState("include");

  return (
    <Dialog role="dialog" aria-labelledby="title">
      <TitleBar>
        <svg width="16" height="16" viewBox="0 0 16 16">
          <path d="M0 0H16V16H0Z" fill="#1d7d83" stroke="#c9dede" />
          <path d="M1 13L5 2L8 13M3 9H7M11 1V9M11 13V16M8 11H9M13 11H16" fill="none" stroke="#fff" strokeWidth="1.4" />
          <path d="M9 9H13V13H9Z" fill="#1d7d83" stroke="#fff" />
        </svg>
        <Title id="title">快速选择</Title>
        <CaptionButton type="button" aria-label="help">
          <svg width="13" height="15" viewBox="0 0 13 15">
            <path d="M3 5C3 0 10 0 10 4C10 7 6.500 6.500 6.500 10M6.500 12V14" fill="none" stroke="#fff" strokeWidth="2" />
          </svg>
        </CaptionButton>
        <CaptionButton type="button" aria-label="close" $close>
          <svg width="13" height="13" viewBox="0 0 13 13">
            <path d="M2 2L11 11M11 2L2 11" stroke="#fff" strokeWidth="2" />
          </svg>
        </CaptionButton>
      </TitleBar>
      <Body>
        <FormRow>
          <FormLabel htmlFor="apply">
            <Caption text="应用到" hotkey="Y" colon />
          </FormLabel>
          <Combo id="apply" value="当前选择" />
          <PickButton type="button" aria-label="pick">
            <svg width="16" height="18" viewBox="0 0 16 18">
              <path d="M1 2H10V14H1Z" fill="#fff" stroke="#33527c" />
              <path d="M5 3L10 8M10 3L5 8" stroke="#e00000" strokeWidth="2" />
              <path d="M9 7L15 13L12 13L14 17L12 17L11 14L9 15Z" fill="#f0e6b0" stroke="#555" strokeWidth="0.7" />
            </svg>
          </PickButton>
        </FormRow>
        <FormRow $space={9}>
          <FormLabel htmlFor="kind">
            <Caption text="对象类型" hotkey="B" colon />
          </FormLabel>
          <Combo id="kind" value="所有图元" />
        </FormRow>
        <FormRow $space={9}>
          <FormLabel htmlFor="property" $top>
            <Caption text="特性" hotkey="P" colon />
          </FormLabel>
          <ListBox id="property" size={12} value={property} onChange={(e) => setProperty(e.target.value)}>
            {properties.map((name) => (
              <option key={name}>{name}</option>
            ))}
          </ListBox>
        </FormRow>
        <FormRow $space={9}>
          <FormLabel htmlFor="operator">
            <Caption text="运算符" hotkey="O" colon />
          </FormLabel>
          <Combo id="operator" value="◇ 不等于" />
        </FormRow>
        <FormRow>
          <FormLabel htmlFor="value" $top>
            <Caption text="值" hotkey="V" colon />
          </FormLabel>
          <Combo id="value" value="HIDDEN" tall mono inset={72}>
            <LinePreview viewBox="0 0 56 3">
              <path d="M0 1.500H22M33 1.500H55" stroke="#000" />
            </LinePreview>
          </Combo>
        </FormRow>
        <Group>
          <Legend>如何应用:</Legend>
          <Choice $loose>
            <input type="radio" name="mode" checked={mode === "include"} onChange={() => setMode("include")} />
            <span>
              <Caption text="包括在新选择集中" hotkey="I" />
            </span>
          </Choice>
          <Choice $loose>
            <input type="radio" name="mode" checked={mode === "exclude"} onChange={() => setMode("exclude")} />
            <span>
              <Caption text="排除在新选择集之外" hotkey="E" />
            </span>
          </Choice>
        </Group>
        <Choice>
          <input type="checkbox" />
          <span>
            <Caption text="附加到当前选择集" hotkey="A" />
          </span>
        </Choice>
        <Actions>
          <PushButton type="button" $pressed>
            确定
          </PushButton>
          <PushButton type="button">取消</PushButton>
          <PushButton type="button">
            <Caption text="帮助" hotkey="H" />
          </PushButton>
        </Actions>
      </Body>
      <Markup viewBox="149 14 342 451">
        <g fill="none" stroke="#f00" strokeWidth="3">
          <rect x="255" y="134.500" width="194" height="24" rx="4" />
          <rect x="189.500" y="263.500" width="262" height="63" rx="11" />
          <path d="M247 168L213 197L282 256M356 391L272 424" />
        </g>
        <path d="M257 160L249 174L240 164ZM292 265L284 247L276 259ZM258 430L275 418L280 429Z" fill="#f00" />
      </Markup>
      <Note $left={17} $top={185}>选择</Note>
      <Note $left={211} $top={351}>点确定</Note>
    </Dialog>
  );
};

export default function App() {
  return (
    <Shell>
      <GlobalStyle />
      <TopBar>
        <Tools names={standardBar} upright />
      </TopBar>
      <Workspace>
        <ToolDock columns={leftColumns} />
        <Canvas>
          <Wireframe />
          <Block />
        </Canvas>
        <ScrollTrack>
          <ScrollPart aria-label="up">
            <Chevron up size={11} />
          </ScrollPart>
          <ScrollPart aria-label="scroll">
            <svg width="7" height="8" viewBox="0 0 7 8">
              <path d="M0 0.500H7M0 2.500H7M0 4.500H7M0 6.500H7" stroke="#8ca5e0" />
            </svg>
          </ScrollPart>
          <ScrollPart aria-label="down">
            <Chevron size={11} />
          </ScrollPart>
        </ScrollTrack>
        <ToolDock columns={rightColumns} />
      </Workspace>
      <QuickSelect />
      <Stamp>shaonx 2010-5-8</Stamp>
      <Watermark>
        <SiteName>中国教程网</SiteName>
        <SiteAddress>
          JCWcn<i>.</i>com
        </SiteAddress>
        <ForumName>
          思缘设计论坛 <small>WWW.MISSYUAN.COM</small>
        </ForumName>
      </Watermark>
    </Shell>
  );
}
